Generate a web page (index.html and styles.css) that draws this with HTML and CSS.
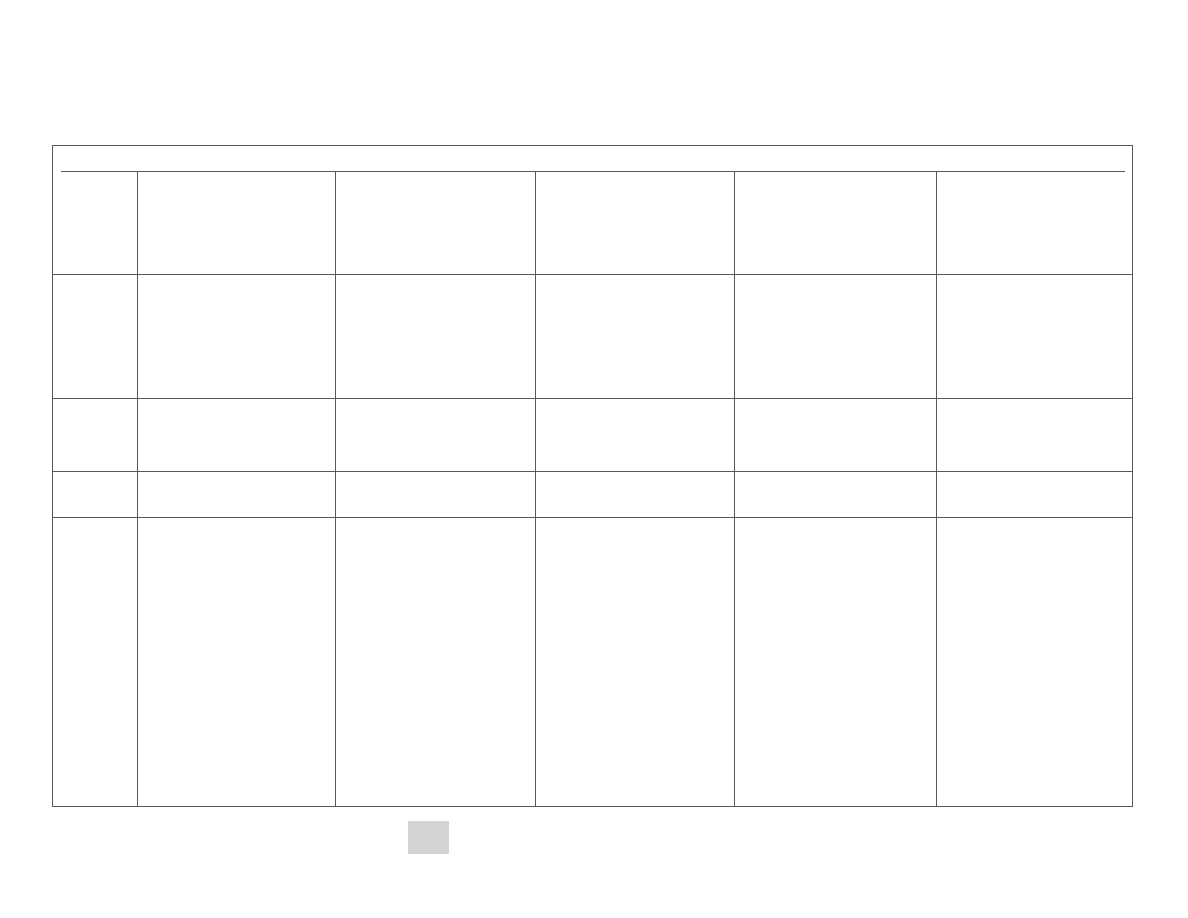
FILE: index.html
```html
<!DOCTYPE html>
<html>
<head>
<meta charset="utf-8">
<link rel="stylesheet" href="styles.css">
</head>
<body>
<div class="page">
  <div class="frame">
    <div class="cap"></div>
    <div class="grid">
      <div class="c"></div><div class="c"></div><div class="c"></div><div class="c"></div><div class="c"></div><div class="c last"></div>
      <div class="c"></div><div class="c"></div><div class="c"></div><div class="c"></div><div class="c"></div><div class="c last"></div>
      <div class="c"></div><div class="c"></div><div class="c"></div><div class="c"></div><div class="c"></div><div class="c last"></div>
      <div class="c"></div><div class="c"></div><div class="c"></div><div class="c"></div><div class="c"></div><div class="c last"></div>
      <div class="c bottom"></div><div class="c bottom"></div><div class="c bottom"></div><div class="c bottom"></div><div class="c bottom"></div><div class="c bottom last"></div>
    </div>
  </div>
  <div class="chip"></div>
</div>
</body>
</html>
```
FILE: styles.css
```css
* { box-sizing: border-box; }
html, body { margin: 0; padding: 0; background: #fff; font-family: "Liberation Sans", Arial, sans-serif; }
.page { padding: 145px 0 0 52px; }
.frame {
  width: 1081px;
  border: 1px solid #585858;
}
.cap {
  height: 26px;
  margin: 0 7px 0 8px;
  border-bottom: 1px solid #585858;
}
.grid {
  display: grid;
  grid-template-columns: 85px 198px 200px 199px 202px 195px;
  grid-template-rows: 103px 124px 73px 46px 288px;
}
.c {
  border-right: 1px solid #585858;
  border-bottom: 1px solid #585858;
}
.c.last { border-right: none; }
.c.bottom { border-bottom: none; }
.chip {
  width: 41px;
  height: 33px;
  margin: 14px 0 0 356px;
  background: #d4d4d4;
}
```
